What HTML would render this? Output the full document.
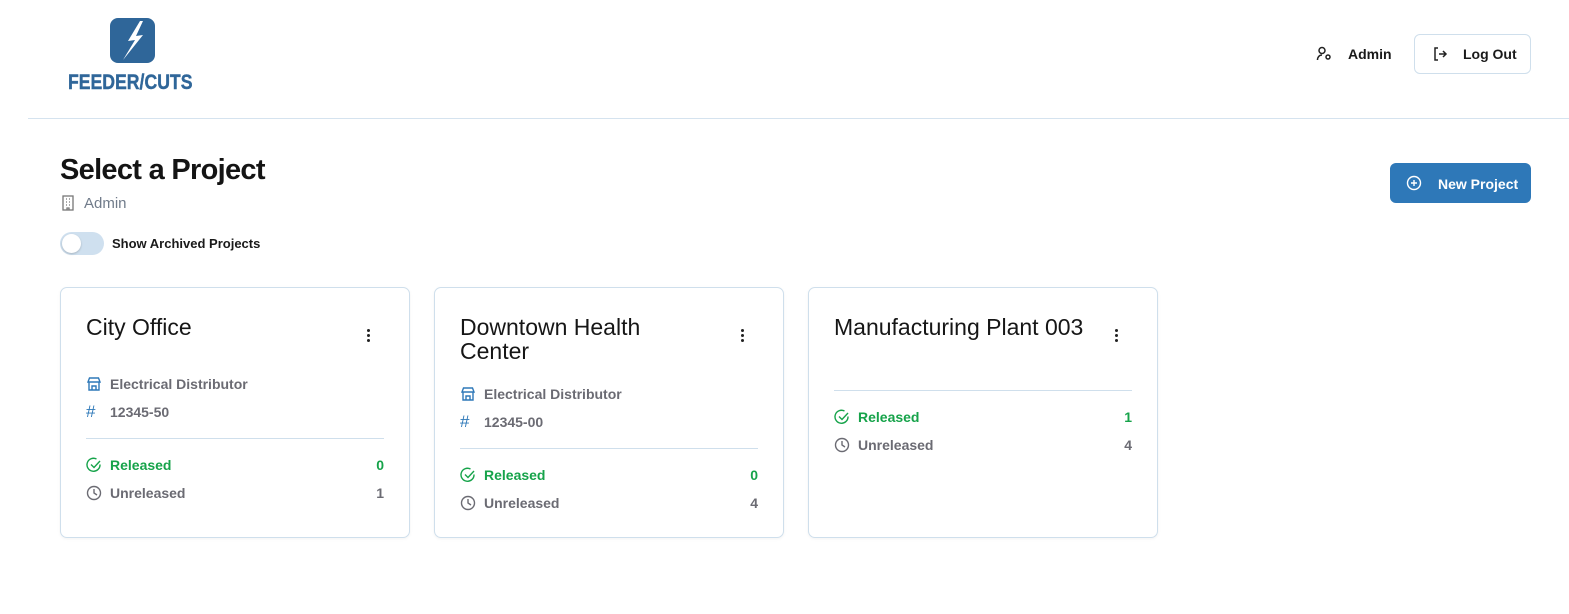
<!DOCTYPE html>
<html><head><meta charset="utf-8"><style>
*{margin:0;padding:0;box-sizing:border-box}
body{width:1569px;height:614px;background:#fff;font-family:"Liberation Sans",sans-serif;position:relative;overflow:hidden;color:#1a1a1a}
.a{position:absolute}
.card{position:absolute;top:287px;width:350px;height:251px;border:1px solid #cfdfec;border-radius:7px;background:#fff;box-shadow:0 1px 3px rgba(0,0,0,.05)}
.t{position:absolute;left:25px;font-size:23px;line-height:24px;color:#161616;width:240px}
.k{position:absolute;left:306px;width:3px}
.k i{display:block;width:3px;height:3px;background:#222;border-radius:50%;margin-bottom:2px}
.row{position:absolute;left:25px;right:25px;font-size:14px;font-weight:bold;display:flex;align-items:center;height:18px}
.row svg{margin-right:8px}
.row .n{margin-left:auto}
.g{color:#16a34a}.m{color:#6b6b73}
.hr{position:absolute;left:25px;right:25px;height:1px;background:#cfdfec}
</style></head><body>
<div class="a" style="left:110px;top:18px;width:45px;height:45px;background:#2f6699;border-radius:8px"></div>
<svg class="a" style="left:110px;top:18px" width="45" height="45" viewBox="0 0 45 45"><path d="M30 3 L18 23 L25 22 L13 42 L33 17 L26 18 L33 3Z" fill="#fff"/></svg>
<div class="a" style="left:68px;top:71px;font-size:21px;font-weight:bold;color:#2f6699;transform:scaleX(.84);transform-origin:left;-webkit-text-stroke:.4px #2f6699">FEEDER/CUTS</div>
<svg class="a" style="left:1316px;top:46px" width="16" height="16" viewBox="0 0 16 16" fill="none" stroke="#222" stroke-width="1.5"><circle cx="6" cy="4.5" r="3"/><path d="M1.5 14c0-3 2-5 4.5-5"/><circle cx="12" cy="11" r="2"/></svg>
<div class="a" style="left:1348px;top:46px;font-size:14px;font-weight:bold">Admin</div>
<div class="a" style="left:1414px;top:34px;width:117px;height:40px;border:1px solid #cfdfec;border-radius:6px"></div>
<svg class="a" style="left:1432px;top:46px" width="16" height="16" viewBox="0 0 16 16" fill="none" stroke="#222" stroke-width="1.5"><path d="M6 2H3v12h3M7 8h7M11 5l3 3-3 3"/></svg>
<div class="a" style="left:1463px;top:46px;font-size:14px;font-weight:bold">Log Out</div>
<div class="a" style="left:28px;top:118px;width:1541px;height:1px;background:#d5e3ef"></div>
<div class="a" style="left:60px;top:154px;font-size:29px;font-weight:bold;color:#141414;letter-spacing:-.7px">Select a Project</div>
<svg class="a" style="left:61px;top:195px" width="14" height="16" viewBox="0 0 14 16" fill="none" stroke="#777" stroke-width="1.3"><rect x="2" y="1" width="10" height="14"/><path d="M5 4h1M8 4h1M5 7h1M8 7h1M5 10h1M8 10h1M6 15v-2h2v2"/></svg>
<div class="a" style="left:84px;top:195px;font-size:15px;color:#707b8a">Admin</div>
<div class="a" style="left:60px;top:232px;width:44px;height:23px;border-radius:12px;background:#cfe0ef"></div>
<div class="a" style="left:62px;top:234px;width:19px;height:19px;border-radius:50%;background:#fff;box-shadow:0 1px 2px rgba(0,0,0,.2)"></div>
<div class="a" style="left:112px;top:236px;font-size:13px;font-weight:bold;color:#1a1a1a">Show Archived Projects</div>
<div class="a" style="left:1390px;top:163px;width:141px;height:40px;background:#2e78b8;border-radius:6px"></div>
<svg class="a" style="left:1406px;top:175px" width="16" height="16" viewBox="0 0 16 16" fill="none" stroke="#fff" stroke-width="1.4"><circle cx="8" cy="8" r="6.5"/><path d="M8 5v6M5 8h6"/></svg>
<div class="a" style="left:1438px;top:176px;font-size:14px;font-weight:bold;color:#fff">New Project</div>

<div class="card" style="left:60px">
<div class="t" style="top:27px">City Office</div>
<div class="k" style="top:41px"><i></i><i></i><i></i></div>
<div class="row m" style="top:87px"><svg width="16" height="16" viewBox="0 0 16 16" fill="none" stroke="#2e78b8" stroke-width="1.4"><path d="M2 6l1.5-4h9L14 6zM3 6v8h10V6M6 14v-4h4v4"/></svg>Electrical Distributor</div>
<div class="row m" style="top:115px"><span style="color:#2e78b8;font-size:17px;font-weight:normal;width:16px;margin-right:8px">#</span>12345-50</div>
<div class="hr" style="top:150px"></div>
<div class="row g" style="top:168px"><svg width="16" height="16" viewBox="0 0 16 16" fill="none" stroke="#16a34a" stroke-width="1.4"><path d="M14 7.5A6.5 6.5 0 1 1 10.5 2"/><path d="M5 7.5l3 3 6-6.5"/></svg>Released<span class="n">0</span></div>
<div class="row m" style="top:196px"><svg width="16" height="16" viewBox="0 0 16 16" fill="none" stroke="#6b6b73" stroke-width="1.4"><circle cx="8" cy="8" r="6.5"/><path d="M8 4v4l3 2"/></svg>Unreleased<span class="n">1</span></div>
</div>

<div class="card" style="left:434px">
<div class="t" style="top:27px">Downtown Health Center</div>
<div class="k" style="top:41px"><i></i><i></i><i></i></div>
<div class="row m" style="top:97px"><svg width="16" height="16" viewBox="0 0 16 16" fill="none" stroke="#2e78b8" stroke-width="1.4"><path d="M2 6l1.5-4h9L14 6zM3 6v8h10V6M6 14v-4h4v4"/></svg>Electrical Distributor</div>
<div class="row m" style="top:125px"><span style="color:#2e78b8;font-size:17px;font-weight:normal;width:16px;margin-right:8px">#</span>12345-00</div>
<div class="hr" style="top:160px"></div>
<div class="row g" style="top:178px"><svg width="16" height="16" viewBox="0 0 16 16" fill="none" stroke="#16a34a" stroke-width="1.4"><path d="M14 7.5A6.5 6.5 0 1 1 10.5 2"/><path d="M5 7.5l3 3 6-6.5"/></svg>Released<span class="n">0</span></div>
<div class="row m" style="top:206px"><svg width="16" height="16" viewBox="0 0 16 16" fill="none" stroke="#6b6b73" stroke-width="1.4"><circle cx="8" cy="8" r="6.5"/><path d="M8 4v4l3 2"/></svg>Unreleased<span class="n">4</span></div>
</div>

<div class="card" style="left:808px">
<div class="t" style="top:27px;width:280px">Manufacturing Plant 003</div>
<div class="k" style="top:41px"><i></i><i></i><i></i></div>
<div class="hr" style="top:102px"></div>
<div class="row g" style="top:120px"><svg width="16" height="16" viewBox="0 0 16 16" fill="none" stroke="#16a34a" stroke-width="1.4"><path d="M14 7.5A6.5 6.5 0 1 1 10.5 2"/><path d="M5 7.5l3 3 6-6.5"/></svg>Released<span class="n">1</span></div>
<div class="row m" style="top:148px"><svg width="16" height="16" viewBox="0 0 16 16" fill="none" stroke="#6b6b73" stroke-width="1.4"><circle cx="8" cy="8" r="6.5"/><path d="M8 4v4l3 2"/></svg>Unreleased<span class="n">4</span></div>
</div>
</body></html>
